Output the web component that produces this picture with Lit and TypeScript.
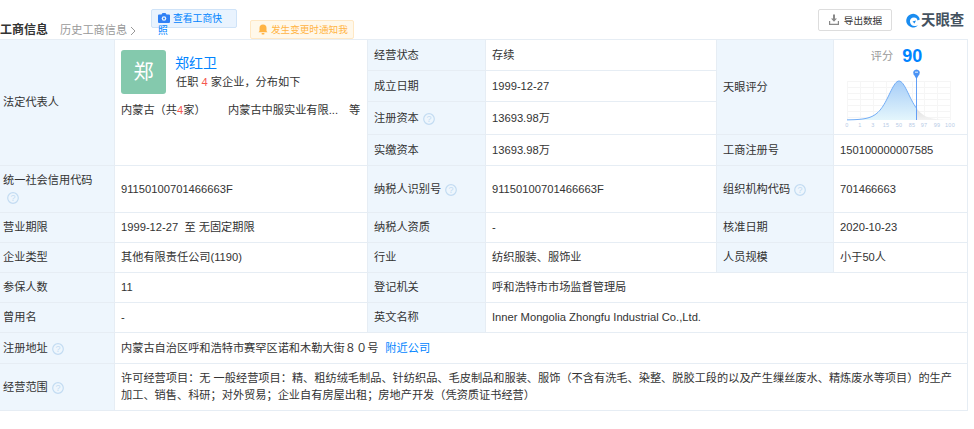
import { LitElement, html, css, svg } from "lit";
import { customElement } from "lit/decorators.js";

const help = html`<svg class="help" width="12" height="12" viewBox="0 0 12 12"><circle cx="6" cy="6" r="5.300" fill="none" stroke="#c3dcf2" stroke-width="1.200"/><text x="6" y="9.200" text-anchor="middle" font-size="9" fill="#c3dcf2" font-family="Liberation Sans">?</text></svg>`;

const ticks: [number, string][] = [[2,"0"],[15,"1"],[28,"3"],[41,"15"],[54,"50"],[67,"85"],[79,"97"],[92,"99"],[105,"100"]];

const BASE = 53, PEAK = 39, CENTER = 54, W = 14.5;
const curveY = (x: number) => {
  const c = Math.cosh((x - CENTER) / W);
  return +(BASE - PEAK / (c * c)).toFixed(2);
};
const pts = (a: number, b: number) => {
  const out: string[] = [];
  for (let x = a; x < b; x += 1) out.push(`${x} ${curveY(x)}`);
  out.push(`${b} ${curveY(b)}`);
  return out.join(" L");
};
const leftLine = `M${pts(2, 71.5)}`;
const leftFill = `${leftLine} L71.5 ${BASE} L2 ${BASE}Z`;
const rightFill = `M${pts(71.5, 106)} L106 ${BASE} L71.5 ${BASE}Z`;

const chart = html`<svg class="chart" width="114" height="62" viewBox="0 0 114 62">
  <defs>
    <linearGradient id="fill" x1="0" y1="0" x2="0" y2="1"><stop offset="0" stop-color="#a6cdf8"/><stop offset="1" stop-color="#e4f6fc"/></linearGradient>
    <linearGradient id="gray" x1="0" y1="0" x2="0" y2="1"><stop offset="0" stop-color="#dedede"/><stop offset="1" stop-color="#f3f3f3"/></linearGradient>
  </defs>
  ${[14,20,26,32,38,44,50].map(y => svg`<line x1="2" x2="106" y1="${y + .5}" y2="${y + .5}" stroke="#f5f5f5"/>`)}
  ${[2,15,28,41,54,67,79,92,105].map(x => svg`<line x1="${x + .5}" x2="${x + .5}" y1="14" y2="53" stroke="#f6f6f6"/>`)}
  <path d="${rightFill}" fill="url(#gray)"/>
  <path d="${leftFill}" fill="url(#fill)"/>
  <path d="${leftLine}" fill="none" stroke="#74aef6" stroke-width="1"/>
  <line x1="71.500" x2="71.500" y1="6" y2="${BASE}" stroke="#639ff6" stroke-width="1"/>
  <path d="M71.500 12 L68.600 7.300 A3.300 3.300 0 1 1 74.400 7.300Z" fill="#4b93f5"/>
  <rect x="70" y="4.600" width="3" height="1.200" fill="#cfe3fb"/>
  ${ticks.map(([x, t]) => svg`<text x="${x}" y="60" text-anchor="middle" font-size="5.500" letter-spacing=".3" fill="#b7cbe6" font-family="Liberation Sans">${t}</text>`)}
</svg>`;

@customElement("app-root")
export class AppRoot extends LitElement {
  static styles = css`
    :host { display: block; width: 974px; height: 429px; overflow: hidden; background: #fff; color: #333;
      font: 11.2px/17px "Liberation Sans", "Noto Sans CJK SC", sans-serif; }
    .head { display: flex; height: 39px; align-items: flex-start; }
    .title { font-size: 12px; font-weight: 700; color: #333; margin-top: 22px; line-height: 17px; width: 60px; flex: none; }
    .hist { color: #999; margin-top: 22px; width: 91px; flex: none; display: flex; align-items: center; gap: 3px; }
    .snap { flex: none; box-sizing: border-box; width: 86px; height: 19px; margin-top: 9px; padding: 3px 6px 0; background: #e9f3fe; border: 1px solid #cfe3f8; border-radius: 2px; color: #0084ff; font-size: 9.800px; line-height: 12px; margin-right: 13px; }
    .snap svg { vertical-align: -1px; margin-right: 3px; }
    .notice { flex: none; box-sizing: border-box; width: 104px; height: 19px; margin-top: 20px; display: flex; align-items: center; gap: 3px; padding-left: 7px; background: #fff8ea; border: 1px solid #ffe8c4; border-radius: 2px; color: #ffb444; font-size: 9.600px; }
    .export { flex: none; box-sizing: border-box; margin-left: auto; margin-top: 9px; width: 74px; height: 22px; border: 1px solid #ddd; border-radius: 2px; display: flex; align-items: center; justify-content: center; gap: 4px; font-size: 9.600px; color: #333; }
    .logo { flex: none; margin: 10px 10px 0 13px; display: flex; align-items: center; gap: 1px; font-size: 14.400px; font-weight: 700; line-height: 20px; color: #44525f; width: 59px; white-space: nowrap; }
    .grid { margin-left: -3px; width: 971px; display: grid; box-sizing: border-box;
      grid-template-columns: 118px 253px 118px 231px 117px 134px;
      grid-template-rows: 31px 31px 33px 31px 47px 30px 30px 30px 30px 31px 47px;
      border-top: 1px solid #e6edf4; }
    .c { box-sizing: border-box; border-right: 1px solid #e6edf4; border-bottom: 1px solid #e6edf4; padding: 0 6px; display: flex; align-items: center; min-width: 0; }
    .c > div { min-width: 0; }
    .l { background: #eef6fd; }
    .help { vertical-align: -3px; margin-left: 4px; }
    .r4 { grid-row: span 4; }
    .r3 { grid-row: span 3; }
    .s3 { grid-column: span 3; }
    .s5 { grid-column: span 5; }
    .rep { display: block; padding-top: 10px; }
    .who { display: flex; gap: 10px; }
    .avatar { width: 45px; height: 44px; border-radius: 3px; background: #84c9ad; color: #fff; font-size: 20px; display: flex; align-items: center; justify-content: center; flex: none; }
    .name { color: #0084ff; font-size: 14px; line-height: 20px; margin-top: 3px; margin-bottom: 1px; margin-left: -1px; }
    .red { color: #f5574f; }
    .dist { display: flex; margin-top: 8px; line-height: 17px; }
    .dist span:nth-child(1) { width: 107px; flex: none; }
    .dist span:nth-child(2) { width: 121px; flex: none; }
    .link { color: #0084ff; margin-left: 7px; }
    .score { display: block; padding: 0; }
    .stitle { display: flex; justify-content: center; align-items: center; gap: 9px; color: #999; height: 30px; padding-top: 2px; box-sizing: border-box; margin-left: -8px; }
    .stitle b { color: #0084ff; font-size: 18px; }
    .chart { display: block; margin: -3px 0 0 11px; }
  `;

  render() {
    return html`
      <div class="head">
        <div class="title">工商信息</div>
        <div class="hist">历史工商信息
          <svg width="6" height="10" viewBox="0 0 6 10"><path d="M1 1l4 4-4 4" fill="none" stroke="#999"/></svg>
        </div>
        <div class="snap"><svg width="12" height="10" viewBox="0 0 12 10"><path d="M1 1.500h2.500l1-1.500h3l1 1.500h2.500a1 1 0 0 1 1 1v6.500a1 1 0 0 1-1 1h-10a1 1 0 0 1-1-1v-6.500a1 1 0 0 1 1-1z" fill="#2f80f5"/><circle cx="6" cy="5.500" r="2.300" fill="#e9f3fe"/><circle cx="6" cy="5.500" r="1" fill="#2f80f5"/></svg>查看工商快照</div>
        <div class="notice"><svg width="10" height="11" viewBox="0 0 10 11"><path d="M5 0.500a3.500 3.500 0 0 1 3.500 3.500v3l1 1.300h-9l1-1.300v-3a3.500 3.500 0 0 1 3.500-3.500z" fill="#ffb444"/><rect x="3.500" y="9" width="3" height="1.500" rx=".7" fill="#ffb444"/></svg>发生变更时通知我</div>
        <div class="export"><svg width="12" height="12" viewBox="0 0 12 12"><path d="M5 0.500h2v4h2l-3 3.200-3-3.200h2z" fill="#888"/><path d="M1 7h1.200v2.800h7.600V7H11v4H1z" fill="#888"/></svg>导出数据</div>
        <div class="logo"><svg width="15" height="15" viewBox="0 0 15 15" style="flex:none"><path d="M9.500 1A6.800 6.800 0 1 0 13 12.300 6.500 6.500 0 0 1 10.500 13 5 5 0 0 1 5 9 3.800 3.800 0 0 1 9 4.500 3.500 3.500 0 0 1 12.500 7.500L14.800 6.500A7 7 0 0 0 9.500 1z" fill="#1a8cf0"/><path d="M7.500 8.500L11 7.500 9.500 10.500z" fill="#1a8cf0"/></svg><span>天眼查</span></div>
      </div>
      <div class="grid">
        <div class="c l r4">法定代表人</div>
        <div class="c r4 rep">
          <div class="who">
            <div class="avatar">郑</div>
            <div><div class="name">郑红卫</div><div>任职 <span class="red">4</span> 家企业，分布如下</div></div>
          </div>
          <div class="dist"><span>内蒙古（共<span class="red">4</span>家）</span><span>内蒙古中服实业有限...</span><span>等</span></div>
        </div>
        <div class="c l">经营状态</div><div class="c">存续</div>
        <div class="c l r3">天眼评分</div>
        <div class="c r3 score"><div class="stitle"><span>评分</span><b>90</b></div>${chart}</div>
        <div class="c l">成立日期</div><div class="c">1999-12-27</div>
        <div class="c l"><div>注册资本${help}</div></div><div class="c">13693.98万</div>
        <div class="c l">实缴资本</div><div class="c">13693.98万</div>
        <div class="c l">工商注册号</div><div class="c">150100000007585</div>

        <div class="c l"><div>统一社会信用代码${help}</div></div><div class="c">91150100701466663F</div>
        <div class="c l"><div>纳税人识别号${help}</div></div><div class="c">91150100701466663F</div>
        <div class="c l"><div>组织机构代码${help}</div></div><div class="c">701466663</div>

        <div class="c l">营业期限</div><div class="c">1999-12-27&nbsp;&nbsp;至 无固定期限</div>
        <div class="c l">纳税人资质</div><div class="c">-</div>
        <div class="c l">核准日期</div><div class="c">2020-10-23</div>

        <div class="c l">企业类型</div><div class="c">其他有限责任公司(1190)</div>
        <div class="c l">行业</div><div class="c">纺织服装、服饰业</div>
        <div class="c l">人员规模</div><div class="c">小于50人</div>

        <div class="c l">参保人数</div><div class="c">11</div>
        <div class="c l">登记机关</div><div class="c s3">呼和浩特市市场监督管理局</div>

        <div class="c l">曾用名</div><div class="c">-</div>
        <div class="c l">英文名称</div><div class="c s3">Inner Mongolia Zhongfu Industrial Co.,Ltd.</div>

        <div class="c l"><div>注册地址${help}</div></div>
        <div class="c s5">内蒙古自治区呼和浩特市赛罕区诺和木勒大街８０号<span class="link">附近公司</span></div>

        <div class="c l"><div>经营范围${help}</div></div>
        <div class="c s5"><div>许可经营项目：无 一般经营项目：精、粗纺绒毛制品、针纺织品、毛皮制品和服装、服饰（不含有洗毛、染整、脱胶工段的以及产生缫丝废水、精炼废水等项目）的生产加工、销售、科研；对外贸易；企业自有房屋出租；房地产开发（凭资质证书经营）</div></div>
      </div>
    `;
  }
}
